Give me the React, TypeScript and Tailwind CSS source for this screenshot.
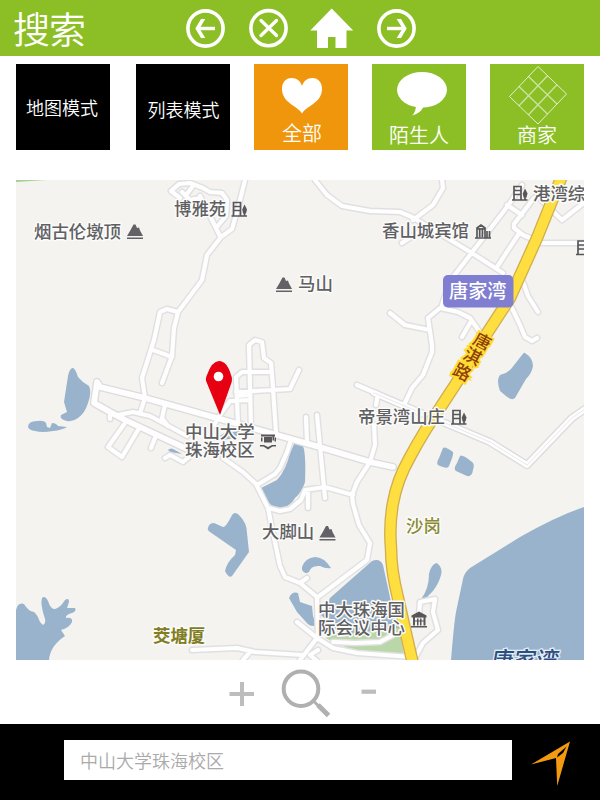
import React from "react";

const FONT = "font-['Noto_Sans_CJK_SC',sans-serif]";

const ROADS = [
  "M200 198L190 200L182 192M171 191L179 184L190 183L203 188L210 192L222 193L227 200L226 216L216 228M171 191L180 198M186 195L193 186M200 196L208 212L220 236",
  "M245 180L238 208L232 229L221 237L207 255L202 280L178 312L167 309L160 312L154 340L142 378L145 398L140 413",
  "M178 312L174 328L172 356L162 383M153 350L172 357",
  "M110 413L110 419M118 415L133 412L150 416L165 424L187 436M165 405L162 418L168 426",
  "M125 423L108 447L122 457L138 430M155 438L151 448M165 458L170 455L183 462L189 457",
  "M251 428L249 345L255 340L262 342L264 358L271 363L273 388L276 433",
  "M238 424L236 377L242 372L270 372M236 392L290 389L299 370M214 425L220 415L230 401L250 400M237 396L250 395",
  "M306 417L307 442M317 415L325 498M291 440L287 452L280 468L275 474L257 485",
  "M223 458L243 472L256 484L268 508L272 528L280 566L285 577L300 583L317 597L318 638",
  "M268 508L280 511L290 509L301 500L305 490L325 487L353 495M308 490L308 508",
  "M370 462L357 482L352 495L353 504L359 525L370 543L367 560L318 597M300 583L307 578",
  "M370 462L375 445L374 425M357 385L378 394L376 405",
  "M432 345L432 352L423 375L412 388L403 407M390 313L405 325L430 330",
  "M432 345L428 318L440 308L458 312L470 318L479 331M470 323L462 337M442 305L446 293",
  "M442 180L443 188L433 205L413 220M424 228L402 243",
  "M315 180L327 195L342 206L370 211L400 212L412 217L472 253L503 273",
  "M522 185L507 207L453 277M507 205L522 215M534 198L514 224L514 228L523 235L542 243L585 243M518 235L497 267",
  "M541 200L562 220L585 202M523 282L528 296L538 312M512 308L520 325L525 337L532 341L537 338",
  "M297 622L317 638L333 648L357 653L412 657M333 642L355 643L380 642L393 635M317 638L300 660",
  "M192 650L237 648L255 652L303 655M250 652L243 660M318 650L310 655L318 662",
  "M420 602L435 599L433 612L438 630L423 643L415 658M420 602L419 615",
];

const MAJOR = [
  "M97 382L100 387L145 398L220 419L277 435L323 448L370 462L393 467M97 382L94 403L110 412L125 420L187 449",
  "M374 393L400 404L490 442L527 465L572 418L588 407",
];

const WATER = [
  "M72 368Q75 367 78 377Q82 382 89 386Q92 392 88 403Q85 413 78 418Q73 422 67 421Q59 419 61 415L67 412L64 402L68 376Q69 370 72 368Z",
  "M28 427Q28 421 37 421Q44 420 46 423L47 427L50 428L52 423Q56 423 58 426L67 427Q62 430 53 431Q42 433 35 431Q29 430 28 427Z",
  "M168 450Q171 447 175 450L182 454L170 452Z",
  "M220 436L226 432L240 431L236 438L222 440Z",
  "M295 442Q302 442 304 449Q306 460 305 482Q302 492 295 498Q290 508 277 508Q268 506 259 489L277 480Q286 470 290 453Z",
  "M525 353Q533 358 533 366Q532 373 526 379L515 398Q512 401 506 396L500 391Q496 380 500 375Q506 374 511 369L522 355Q524 352 525 353Z",
  "M443 448Q445 446 453 452Q454 454 449 466Q448 470 438 465Q436 463 439 458Z",
  "M460 456Q462 454 472 462Q475 464 473 470Q472 477 467 476L456 471Q453 469 457 463Z",
  "M208 528Q209 523 214 523L223 527Q226 527 231 517Q234 510 239 515Q247 523 247 533L249 552L232 576Q229 579 225 571Q227 562 235 555L236 550L210 532Q207 530 208 528Z",
  "M302 567Q305 558 315 557Q324 557 331 568Q326 569 320 566Q311 565 309 572Q305 575 302 570Z",
  "M289 598Q292 591 298 593L300 602L312 606L313 616L316 625Q311 628 306 622L297 612Z",
  "M325 610L330 598L372 561Q380 558 383 565L391 602L398 628L340 634L318 612Z",
  "M16 610Q18 602 24 604Q28 611 34 612Q37 614 40 622L43 625Q46 623 45 619Q40 604 42 598Q45 595 48 601Q51 610 55 609Q60 608 65 600Q69 597 69 602L67 608L75 608Q77 611 72 613Q65 615 66 618Q73 617 72 622Q69 628 61 630L65 636Q50 646 49 660H16Z",
  "M584 507Q557 516 520 537L470 568Q464 573 463 579L456 612Q454 623 451 660H584Z",
  "M437 563Q443 568 441 575Q439 583 433 591L424 600L421 599Q429 589 429 574Q431 564 437 563Z",
];

const YELLOW =
  "M562 176L537 238L510 298L480 344L457 382L440 408Q424 431 410 457Q397 480 393 503Q389 525 391 548Q391 570 398 598L407 638L413 664";

function Mountain({ x, y }: { x: number; y: number }) {
  return (
    <g transform={`translate(${x} ${y})`} fill="#626266">
      <path d="M0 12.500L3 7.500L6.500 1L8.500 1L10 4.500L12 4L13 7L16 12.500Z" />
      <path d="M0 14H16V15.500H0Z" />
    </g>
  );
}

function Building({ x, y }: { x: number; y: number }) {
  return (
    <g transform={`translate(${x} ${y})`}>
      <path d="M0 14.500H15.500M2 14V1H9V14M2 5H9M2 9H9M13 6V14" fill="none" stroke="#57575a" strokeWidth="1.700" />
      <path d="M13 3L15.500 8L14.500 12H11.500L10.800 8Z" fill="#57575a" />
    </g>
  );
}

function Hotel({ x, y }: { x: number; y: number }) {
  return (
    <g transform={`translate(${x} ${y})`} fill="none" stroke="#57575a" strokeWidth="1.700">
      <path d="M0 15H16M2 15V5L6 2L10 5V15M4.700 5V14M7.400 5V14M2 6H10M12 15V8M14.500 15V8" />
    </g>
  );
}

function School({ x, y }: { x: number; y: number }) {
  return (
    <g transform={`translate(${x} ${y})`} fill="#57575a">
      <path d="M1 1H15V3H14V7H12.500V3H1ZM4 3.500H12V9H4ZM1 4H2.500V8H1ZM14.500 4H16V8H14.500Z" />
      <path d="M0 11.500H4L8 13.500L12 11.500H16V13H12.500L8 16L3.500 13H0Z" />
    </g>
  );
}

function Museum({ x, y }: { x: number; y: number }) {
  return (
    <g transform={`translate(${x} ${y})`} fill="#57575a">
      <path d="M8 0L15.500 4V6H0.500V4ZM2 6H4V14H2ZM6 7H7.500V14H6ZM9 7H10.500V14H9ZM12.500 6H14.500V14H12.500ZM2 9H14V10H2ZM0 14.500H16V16H0Z" />
    </g>
  );
}

type LabelProps = { x: number; cy: number; size?: number; color?: string; weight?: number; children: string };

function Label({ x, cy, size = 17.4, color = "#606063", weight = 500, children }: LabelProps) {
  return (
    <text
      x={x}
      y={cy + size * 0.37}
      fontSize={size}
      fontWeight={weight}
      fill={color}
      stroke="#fbfbfa"
      strokeWidth="3"
      strokeLinejoin="round"
      paintOrder="stroke"
    >
      {children}
    </text>
  );
}

const ROAD_NAME = [
  { ch: "唐", x: 482, y: 342 },
  { ch: "淇", x: 472.5, y: 356.5 },
  { ch: "路", x: 462, y: 372.5 },
];

function MapView() {
  return (
    <svg viewBox="16 180 568 480" className={`block h-[480px] w-[568px] ${FONT}`}>
      <rect x="16" y="180" width="568" height="480" fill="#f4f3ef" />
      <path d="M16 180H46L16 182Z" fill="#a5cf95" />
      <path d="M325 638L345 630L398 622L404 655L357 652Z" fill="#b9d7a8" />
      {WATER.map((d) => (
        <path key={d} d={d} fill="#99b3cc" />
      ))}
      <g fill="none" strokeLinecap="round" strokeLinejoin="round">
        <path d={ROADS.join("")} stroke="#e0e0e2" strokeWidth="7" />
        <path d={MAJOR.join("")} stroke="#dcdcdf" strokeWidth="8.400" />
        <path d={ROADS.join("")} stroke="#fefefe" strokeWidth="4.200" />
        <path d={MAJOR.join("")} stroke="#fefefe" strokeWidth="5.600" />
        <path d={MAJOR[1]} stroke="#e9e9eb" strokeWidth="1" />
        <path d={YELLOW} stroke="#cfae50" strokeWidth="12.600" />
        <path d={YELLOW} stroke="#ffde40" strokeWidth="10" />
      </g>

      <Label x={34} cy={231.5}>烟古伦墩顶</Label>
      <Mountain x={127} y={223.5} />
      <Label x={174} cy={209}>博雅苑</Label>
      <Building x={231.5} y={201.5} />
      <Mountain x={276} y={276.5} />
      <Label x={298} cy={283.5}>马山</Label>
      <Label x={382} cy={230.5}>香山城宾馆</Label>
      <Hotel x={475} y={223} />
      <Building x={512} y={185.5} />
      <Label x={533} cy={193.5}>港湾综</Label>
      <Building x={576} y={240} />
      <Label x={358} cy={416.5}>帝景湾山庄</Label>
      <Building x={451} y={409.5} />
      <Label x={185} cy={432}>中山大学</Label>
      <Label x={185} cy={450}>珠海校区</Label>
      <School x={260} y={433.5} />
      <Label x={262} cy={532}>大脚山</Label>
      <Mountain x={319.5} y={525} />
      <Label x={318} cy={610}>中大珠海国</Label>
      <Label x={318} cy={628}>际会议中心</Label>
      <Museum x={411} y={611.5} />
      <Label x={406} cy={525.5} color="#8a8a35">沙岗</Label>
      <Label x={153} cy={636} color="#807d22" weight={700}>茭塘厦</Label>

      <rect x="443" y="275" width="70.500" height="32.500" rx="5" fill="#807ed0" />
      <text x="449" y="298" fontSize="19.200" fontWeight="500" fill="#fff">唐家湾</text>

      <g transform="translate(490 667.500) skewX(-10)">
        <text fontSize="22.500" fontWeight="500" fill="#2c4f80" stroke="#e6eef5" strokeWidth="2.500" paintOrder="stroke">
          唐家湾
        </text>
      </g>

      {ROAD_NAME.map((c) => (
        <text
          key={c.ch}
          transform={`translate(${c.x} ${c.y}) rotate(28)`}
          y="6"
          textAnchor="middle"
          fontSize="17.500"
          fontWeight="500"
          fill="#8f3f08"
          stroke="#ffdc35"
          strokeWidth="4"
          paintOrder="stroke"
        >
          {c.ch}
        </text>
      ))}

      <path d="M220 415L206.500 382Q205 379 207 375Q212 361 219 361Q227 361 231 375Q233 379 231 384Z" fill="#e60012" />
      <circle cx="218.500" cy="376.500" r="4.800" fill="#fff" />
    </svg>
  );
}

function Header() {
  return (
    <header className="flex h-14 items-center bg-[#8cbf26] pl-[13px]">
      <h1 className="w-[172px] text-[37px] leading-[54px] font-[350] tracking-[-1px] text-white">搜索</h1>
      <nav className="flex items-center text-white" aria-label="导航">
        <svg className="h-14 w-[42px]" viewBox="185 0 42 56" fill="none" stroke="currentColor">
          <circle cx="205.500" cy="28.500" r="17.600" strokeWidth="3.600" />
          <path d="M215 28.500H198" strokeWidth="3.400" />
          <path d="M201 19H205.300L199.500 28.500L205.300 38H201L195.300 28.500Z" fill="currentColor" stroke="none" />
        </svg>
        <svg className="ml-[21px] h-14 w-10" viewBox="248 0 40 56" fill="none" stroke="currentColor">
          <circle cx="268.500" cy="28.200" r="17.600" strokeWidth="3.600" />
          <path d="M261 20.500L276.500 35.500M276.500 20.500L261 35.500" strokeWidth="3.300" strokeLinecap="round" />
        </svg>
        <svg className="ml-[22px] h-14 w-[44px]" viewBox="310 0 44 56" fill="currentColor">
          <path d="M331.700 8.500L353.200 30.500H346.500V48H335.500V37H328V48H317V30.500H310.300Z" />
        </svg>
        <svg className="ml-[21px] h-14 w-[44px]" viewBox="375 0 44 56" fill="none" stroke="currentColor">
          <circle cx="396.500" cy="28.500" r="17.600" strokeWidth="3.600" />
          <path d="M387 28.500H404" strokeWidth="3.400" />
          <path d="M401 19H396.700L402.500 28.500L396.700 38H401L406.700 28.500Z" fill="currentColor" stroke="none" />
        </svg>
      </nav>
    </header>
  );
}

function Filters() {
  const tile = "flex h-[86px] w-[94px] flex-col items-center text-white font-[350]";
  return (
    <div className="flex gap-6 px-4 pt-2">
      <button className={`${tile} mr-0.5 bg-black pt-[30px] pr-0.5 text-[18px] leading-[26px]`}>地图模式</button>
      <button className={`${tile} bg-black pt-8 pl-px text-[18px] leading-[26px]`}>列表模式</button>
      <button className={`${tile} bg-[#f0960c]`}>
        <svg className="h-[56px] w-[94px]" viewBox="254 64 94 56" fill="#fff">
          <path d="M302 113.500C298 106 282 103 282 89C282 82 286 78 291.500 78C297 78 300.500 81 302 86C303.500 81 307 78 312.500 78C318 78 322 82 322 89C322 103 306 106 302 113.500Z" />
        </svg>
        <span className="pl-0.5 text-[20px] leading-[26px]">全部</span>
      </button>
      <button className={`${tile} bg-[#8cbf26]`}>
        <svg className="h-[58px] w-[94px]" viewBox="372 64 94 58" fill="#fff">
          <ellipse cx="422" cy="89.800" rx="25" ry="17.800" />
          <path d="M416 105Q416 112 412 115.500Q420 114 424 106Z" />
        </svg>
        <span className="text-[20px] leading-[26px]">陌生人</span>
      </button>
      <button className={`${tile} bg-[#8cbf26]`}>
        <svg className="h-[58px] w-[94px] overflow-visible" viewBox="490 64 94 58" fill="none" stroke="#fff">
          <path d="M538 66.500L566.500 94L538 124L509.500 96.500Z" strokeOpacity=".75" strokeWidth="1" />
          <path
            d="M547.500 75.700L519 105.700M557 84.800L528.500 114.800M528.500 76.500L557 104M519 86.500L547.500 114"
            strokeOpacity=".55"
            strokeWidth="1.400"
          />
        </svg>
        <span className="text-[20px] leading-[26px]">商家</span>
      </button>
    </div>
  );
}

export default function App() {
  return (
    <div className={`h-[800px] w-[600px] overflow-hidden bg-white ${FONT}`}>
      <Header />
      <Filters />
      <div className="px-4 pt-[30px]">
        <MapView />
      </div>
      <div className="flex h-16 justify-center">
        <svg className="h-16 w-[160px]" viewBox="220 660 160 64" fill="none" stroke="#bdbdbd">
          <path d="M229.500 694H254M242 682V706" strokeWidth="4" />
          <path d="M361.500 691.700H376" strokeWidth="4.200" />
          <circle cx="301" cy="688.700" r="17.300" stroke="#b0b0b0" strokeWidth="4" />
          <path d="M313.500 701L319 706.500" stroke="#b0b0b0" strokeWidth="3" />
          <path d="M318 705L328.500 715.500" stroke="#b0b0b0" strokeWidth="5" />
        </svg>
      </div>
      <footer className="flex h-[76px] items-start bg-black pt-4 pl-16">
        <div className="flex h-10 w-[448px] items-center bg-white pt-px pl-4 text-[18px] font-[350] text-[#aaa]">
          中山大学珠海校区
        </div>
        <svg className="ml-[17px] h-12 w-[44px]" viewBox="529 740 44 48">
          <path d="M570 741.500L557.200 786L556 758L531 764.500Z" fill="#f39a10" />
          <path d="M566.500 746.500L563 753L557 757.500L558 754Z" fill="#000" />
        </svg>
      </footer>
    </div>
  );
}
